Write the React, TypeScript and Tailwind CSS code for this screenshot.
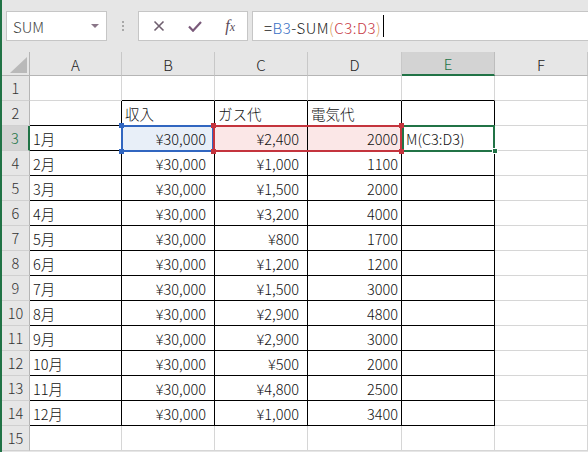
import React from 'react';

const months = ['1月', '2月', '3月', '4月', '5月', '6月', '7月', '8月', '9月', '10月', '11月', '12月'];
const gas = ['¥2,400', '¥1,000', '¥1,500', '¥3,200', '¥800', '¥1,200', '¥1,500', '¥2,900', '¥2,900', '¥500', '¥4,800', '¥1,000'];
const elec = ['2000', '1100', '2000', '4000', '1700', '1200', '3000', '4800', '3000', '2000', '2500', '3400'];
const cols = ['A', 'B', 'C', 'D', 'E', 'F'];

const font = { fontFamily: '"Noto Sans CJK JP", "Noto Sans", sans-serif' };

function Cell({ children, className = '' }: { children?: React.ReactNode; className?: string }) {
    return (
        <div className={`flex items-center overflow-visible whitespace-nowrap border-b border-r text-[14.5px] leading-none font-light text-[#111] ${className}`}>
            {children}
        </div>
    );
}

function RowHead({ n }: { n: number }) {
    const active = n === 3;
    return (
        <div
            className={`flex items-center justify-center border-b border-[#d0d0d0] text-[14.5px] leading-none font-light ${
                active ? 'bg-[#d3d3d3] text-[#217346] border-r-2 border-r-[#217346]' : 'bg-[#e6e6e6] text-[#333] border-r border-r-[#b5b5b5]'
            }`}
        >
            {n}
        </div>
    );
}

export default function App() {
    const grid = 'border-[#d6d6d6]';
    const blk = 'border-black';

    const rows: React.ReactNode[] = [];
    for (let r = 1; r <= 15; r++) {
        rows.push(<RowHead key={`h${r}`} n={r} />);
        for (let c = 0; c < 6; c++) {
            let cls = grid;
            let content: React.ReactNode = null;
            const inTable = c <= 4;
            if (r === 1 && c >= 1 && c <= 4) cls = `${grid} !border-b-black`;
            if (r === 2 && c === 0) cls = blk;
            if (r === 2 && c >= 1 && c <= 4) cls = blk;
            if (r >= 3 && r <= 14 && inTable) cls = blk;
            if (r === 2) {
                if (c === 1) content = '収入';
                if (c === 2) content = 'ガス代';
                if (c === 3) content = '電気代';
            }
            let align = 'pl-[3px]';
            let bg = '';
            if (r >= 3 && r <= 14) {
                const i = r - 3;
                if (c === 0) content = months[i];
                if (c === 1) { content = '¥30,000'; align = 'justify-end pr-[8px]'; }
                if (c === 2) { content = gas[i]; align = 'justify-end pr-[8px]'; }
                if (c === 3) { content = elec[i]; align = 'justify-end pr-[3px]'; }
            }
            if (r === 3) {
                if (c === 1) bg = 'bg-[#e8eff8]';
                if (c === 2 || c === 3) bg = 'bg-[#fbe7e7]';
                if (c === 4) { content = 'M(C3:D3)'; align = 'pl-[4px]'; }
            }
            rows.push(
                <Cell key={`c${r}-${c}`} className={`${cls} ${align} ${bg} pt-[2px]`}>
                    {content}
                </Cell>
            );
        }
    }

    return (
        <div className="w-[588px] h-[452px] overflow-hidden bg-[#e6e6e6] border-l-2 border-[#217346]" style={font}>
            {/* formula bar */}
            <div className="h-[52px] flex items-start pt-[11px] pl-[4px]">
                <div className="w-[101px] h-[30px] bg-white border border-[#c6c6c6] flex items-center justify-between pl-[6px] pr-[7px]">
                    <span className="text-[15px] font-light text-[#444] pt-[3px]">SUM</span>
                    <svg width="8" height="4" viewBox="0 0 8 4"><path d="M0 0h8L4 4z" fill="#8a7688" /></svg>
                </div>
                <div className="w-[31px] h-[30px] flex flex-col items-center justify-center gap-[2px]">
                    <span className="w-[2px] h-[2px] bg-[#a8a8a8]" />
                    <span className="w-[2px] h-[2px] bg-[#a8a8a8]" />
                    <span className="w-[2px] h-[2px] bg-[#a8a8a8]" />
                </div>
                <div className="w-[110px] h-[30px] bg-white border border-[#c6c6c6] flex items-center justify-between pl-[14px] pr-[12px]">
                    <svg width="12" height="12" viewBox="0 0 12 12"><path d="M1.5 1.5l9 9M10.5 1.5l-9 9" stroke="#6f5f6f" strokeWidth="1.6" /></svg>
                    <svg width="14" height="11" viewBox="0 0 14 11"><path d="M1 5.5l4 4.2L13 1" stroke="#7a5a7a" strokeWidth="2.2" fill="none" /></svg>
                    <span className="text-[16px] leading-none italic text-[#5a4a5a]" style={{ fontFamily: '"Liberation Serif", serif' }}>f<span className="text-[12px]">x</span></span>
                </div>
                <div className="ml-[4px] flex-1 h-[30px] bg-white border border-[#c6c6c6] border-r-0 flex items-center pl-[11px]">
                    <span className="text-[15px] leading-none font-light tracking-[0.5px] pt-[2px] text-[#222]">
                        =<span className="text-[#3a6fc4]">B3</span>-SUM<span className="text-[#d79b5a]">(</span><span className="text-[#c73843]">C3:D3</span><span className="text-[#d79b5a]">)</span>
                    </span>
                    <span className="ml-[2px] w-[1px] h-[22px] bg-black" />
                </div>
            </div>

            {/* sheet */}
            <div className="relative">
                <div className="grid grid-cols-[28px_92px_93px_93px_94px_93px_1fr] grid-rows-[24px_repeat(15,25px)] bg-white">
                    <div className="bg-[#e6e6e6] border-r border-b border-[#b5b5b5] flex items-end justify-end pr-[2px] pb-[2px]">
                        <svg width="17" height="16" viewBox="0 0 17 16"><path d="M17 0V16H0z" fill="#b9b9b9" /></svg>
                    </div>
                    {cols.map((c) => (
                        <div
                            key={c}
                            className={`flex items-center justify-center text-[15px] leading-none font-light pt-[1px] ${
                                c === 'E'
                                    ? 'bg-[#d3d3d3] text-[#217346] border-b-2 border-b-[#217346] border-r border-r-[#bdbdbd]'
                                    : 'bg-[#e6e6e6] text-[#222] border-b border-b-[#b5b5b5] border-r border-r-[#c8c8c8]'
                            }`}
                        >
                            {c}
                        </div>
                    ))}
                    {rows}
                </div>

                {/* selection overlays */}
                <div className="absolute left-[119px] top-[73px] w-[93px] h-[27px] border-2 border-[#3166c0] pointer-events-none" />
                <div className="absolute left-[211px] top-[73px] w-[189px] h-[27px] border-2 border-[#c4343d] pointer-events-none" />
                <div className="absolute left-[400px] top-[73px] w-[93px] h-[27px] border-2 border-[#217346] pointer-events-none" />
                <div className="absolute left-[117px] top-[71px] w-[5px] h-[5px] bg-[#3166c0]" />
                <div className="absolute left-[117px] top-[97px] w-[5px] h-[5px] bg-[#3166c0]" />
                <div className="absolute left-[209px] top-[71px] w-[5px] h-[5px] bg-[#c4343d]" />
                <div className="absolute left-[209px] top-[97px] w-[5px] h-[5px] bg-[#c4343d]" />
                <div className="absolute left-[397px] top-[71px] w-[5px] h-[5px] bg-[#c4343d]" />
                <div className="absolute left-[397px] top-[97px] w-[5px] h-[5px] bg-[#c4343d]" />
                <div className="absolute left-[490px] top-[96px] w-[6px] h-[6px] bg-[#217346] border border-white" />
            </div>
        </div>
    );
}
